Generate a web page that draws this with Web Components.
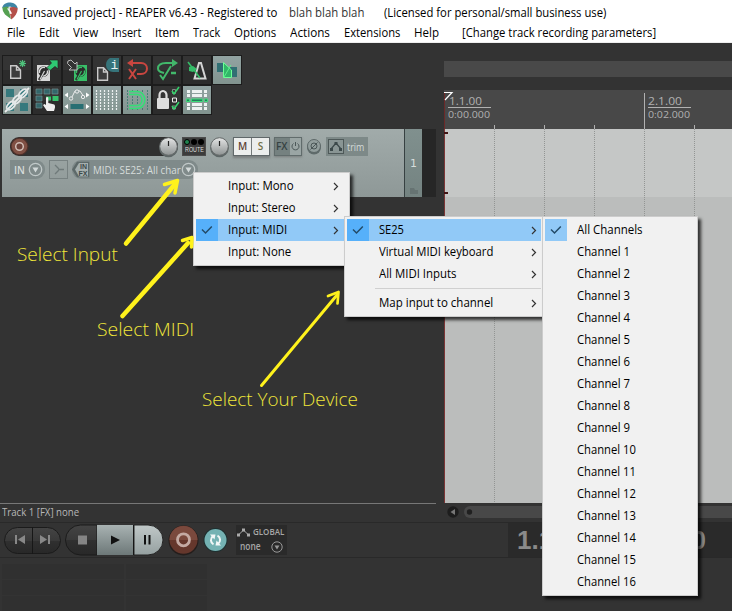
<!DOCTYPE html>
<html lang="en"><head><meta charset="utf-8"><title>REAPER</title>
<style>html,body{margin:0;width:732px;height:611px;overflow:hidden;background:#333}body{font:12px "Open Sans","Noto Sans",sans-serif}</style>
</head><body><reaper-app></reaper-app>
<script>
const define=(name,html,setup)=>customElements.define(name,class extends HTMLElement{
  connectedCallback(){
    if(this.shadowRoot)return;
    const t=document.createElement('template');
    t.innerHTML=typeof html==='function'?html(this):html;
    this.attachShadow({mode:'open'}).append(t.content.cloneNode(true));
    if(setup)setup(this,this.shadowRoot);
  }
});

/* Text condensed or widened to an exact advance width (attribute w). */
define('fit-text',e=>`<style>:host{display:inline-block;width:${e.getAttribute('w')}px;white-space:nowrap;flex:none}
span{display:inline-block;transform-origin:0 50%}</style><span>${e.textContent}</span>`,(e,r)=>{
  const s=r.querySelector('span');
  s.style.transform=`scaleX(${e.getAttribute('w')/s.offsetWidth})`;
});

define('title-bar',`<style>:host{display:flex;align-items:center;height:24px;background:#fff;color:#000;box-sizing:border-box;padding-left:2px}
svg{margin:-3px 5px 0 0;flex:none}.b{margin:1px 20px 0 12px;color:#333}</style>
<svg width="16" height="18" viewBox="0 0 16 18"><path d="M.2 6C.8 2 5 .3 8.500.5S15 3 15.800 6.500L12 6 8 4.500 4 5.500Z" fill="#3f86a5"/><path d="M.3 5.500 5 4.500 7.500 6 7 9 9 17 3 12.500Q.3 9.500.3 5.500Z" fill="#55a052"/><path d="M7 6C9.500 4.500 13 4.800 15.800 6.500 15.500 11 13 15 9.300 17.500L8 12 10 11.500Z" fill="#b4504a"/><path d="M5 6.500 8 6 7 9.500Z" fill="#e8f0ee"/></svg>
<fit-text w="254">[unsaved project] - REAPER v6.43 - Registered to</fit-text><fit-text class="b" w="75">blah blah blah</fit-text><fit-text w="222">(Licensed for personal/small business use)</fit-text>`);

define('menu-bar',`<style>:host{display:flex;align-items:center;gap:14px;height:19px;background:#fff;color:#000;padding-left:7px;box-sizing:border-box;border-bottom:1px solid #eee;line-height:16px}.c{margin-left:9px}</style>
${[['File',18],['Edit',20],['View',25],['Insert',29],['Item',24],['Track',27],['Options',42],['Actions',40],['Extensions',56],['Help',25]].map(([a,w])=>`<fit-text w="${w}">${a}</fit-text>`).join('')}<fit-text class="c" w="194">[Change track recording parameters]</fit-text>`);

const disk=(x,c)=>`<g transform="translate(${x} 10)"><path d="M0 0H13V16H0Z" fill="${c}"/><circle cx="6.500" cy="6.500" r="5.200" fill="#2b2b2b"/><path d="M2.500 8A4.500 4.500 0 0 1 8 2.500M10.500 5.500A4.500 4.500 0 0 1 6 11" stroke="${c}" stroke-width="1.500" fill="none"/><path d="M7 7 2 15" stroke="#2b2b2b" stroke-width="2.500"/><path d="M7.500 6 3 14.500" stroke="${c}" stroke-width="1.200"/></g>`;
const doc=(x,y)=>`<path transform="translate(${x} ${y})" d="M.7.7H6.500L10.500 5V13.300H.7ZM6.500.7V5H10.500" fill="#3c3c3c" stroke="#c9c9c9" stroke-width="1.400"/>`;
const icons={
 fresh:doc(8,10)+`<path d="M20.500 5v7M17 8.500h7M18 6l5 5M23 6l-5 5" stroke="#4fc27c" stroke-width="1.200"/>`,
 open:disk(5,'#d8d8d8')+`<path d="M17 5h9v9l-3-2.500-5 4-3-3 4.500-4.500Z" fill="#2fc873" stroke="#222" stroke-width=".7"/>`,
 save:disk(12,'#38bf68')+`<path d="M6 6 9 5l4 4 2-2V15H7l2.500-2.500-4-4Z" fill="#333" stroke="#bbb"/>`,
 info:doc(5,12)+`<path d="M27 3V17H21A7 7 0 0 1 14 10C14 6 16 4 18 3Z" fill="#36747a"/><text x="18.500" y="13.500" font-family="Liberation Mono" font-size="13" fill="#e8f0f0">i</text>`,
 undo:`<g fill="none" stroke="#c94640" stroke-width="2"><path d="M9 8H19C27 8 27 19 19 19H15"/><path d="M7 14 14 24M14 14 7 24"/></g><path d="M5 8l6-4v8Z" fill="#c94640"/>`,
 redo:`<g fill="none" stroke="#42b86b" stroke-width="2"><path d="M23 8H14C9 8 6 10 6 13.500S9 17 12 18"/><path d="M8 20l3 4 8-13"/><path d="M19 18h5" stroke-width="2.500"/></g><path d="M26 8l-6-4v8Z" fill="#42b86b"/>`,
 metro:`<path d="M12.500 23.500 17 8H19L23.500 23.500Z" fill="none" stroke="#d4d4d4" stroke-width="2"/><path d="M6 7 18 23" stroke="#35bd68" stroke-width="1.600"/><path d="M7 12l4-1 4 3-4 3-4-1Z" fill="#35bd68"/>`,
 auto:`<path d="M5 8h6v9H5ZM18 12h7v10h-7Z" fill="#306f73"/><path d="M11.500 7.500V22.500H19.500V15Z" fill="#31b768" stroke="#6dff97" stroke-width="1"/><path d="M12 22 19 10" stroke="#5bf08c"/>`,
 ripple:`<path d="M4 4h8v8H4ZM18 4h8v8h-8ZM4 18h8v8H4ZM18 18h8v8h-8Z" fill="#36797d"/><path d="M3 27 27 3" stroke="#eee" stroke-width="1.800"/><g fill="none" stroke="#e4e8e8" stroke-width="1.900"><ellipse cx="9" cy="20.500" rx="5.200" ry="3" transform="rotate(-45 9 20.500)"/><ellipse cx="15" cy="14.500" rx="5.200" ry="3" transform="rotate(-45 15 14.500)"/><ellipse cx="21" cy="8.500" rx="5.200" ry="3" transform="rotate(-45 21 8.500)"/></g>`,
 group:`<path d="M4 4h6v5H4ZM12 4h6v5h-6ZM20 4h6v5h-6ZM4 11h6v5H4ZM4 18h6v5H4Z" fill="#33666a" stroke="#709090" stroke-width=".7"/><path d="M14 11.500h5v4h-5ZM20.500 11h6v5h-6Z" fill="#36c16b"/><path d="M14 12.500q1.500-1 2.300 0V18l6 1.500q1 1 .7 3L22 26H15l-4-6 1.500-1L14 20Z" fill="#eee"/>`,
 env:`<path d="M9 14 13 6 18 6 22 12" stroke="#eee" fill="none"/><g fill="#8a9c9b" stroke="#eee"><circle cx="9" cy="13.500" r="1.700"/><circle cx="15" cy="6.500" r="1.700"/><circle cx="21" cy="12" r="1.700"/></g><path d="M8.500 19h13v5h-13Z" fill="#286f73"/><path d="M6 7.500v5L2.500 10ZM24 7.500v5l3.500-2.500ZM6 19v5l-3.500-2.500ZM24 19v5l3.500-2.500Z" fill="#fff"/>`,
 grid:`<path d="M4.500 5v20M8.500 5v20M12.500 5v20M16.500 5v20M20.500 5v20M24.500 5v20" stroke="#edf2f2" stroke-width="1.200" stroke-dasharray="2 1"/>`,
 snap:`<path d="M5.500 5v20M10.500 5v20M15.500 5v20M20.500 5v20M25.500 5v20" stroke="#487d76" stroke-dasharray="2 1"/><path d="M7 8h8c8.500 0 8.500 14 0 14H7" fill="none" stroke="#34df75" stroke-width="4.500"/><path d="M7 8h8c8.500 0 8.500 14 0 14H7" fill="none" stroke="#7fa79a" stroke-width="1.500"/>`,
 lock:`<rect x="5" y="13" width="12" height="11" rx="1" fill="#ddd"/><path d="M7.500 14V10a3.500 4 0 0 1 7 0v4" fill="none" stroke="#ddd" stroke-width="2.200"/><path d="M20.500 13h4v4h-4Z" fill="none" stroke="#eee"/><path d="M20.500 4.500h3v4h-3ZM20.500 21h3v3h-3Z" fill="none" stroke="#888"/><path d="M20 6l2 3 5-7M20 21l2 3 5-7" fill="none" stroke="#35d36c" stroke-width="1.500"/>`,
 matrix:`<g fill="#edf1f1"><path d="M5 5h3v3H5ZM10 5h10v3H10ZM22 5h3v3h-3ZM5 9h3v3H5ZM10 9h10v3H10ZM22 9h3v3h-3ZM5 18h3v3H5ZM10 18h10v3H10ZM22 18h3v3h-3ZM5 22h3v3H5ZM10 22h10v3H10ZM22 22h3v3h-3Z"/></g><path d="M4.500 14h3v2.500h-3ZM9.500 14h11v2.500h-11ZM22.500 14h3v2.500h-3Z" fill="#267a5c" stroke="#3ade78"/>`
};
define('tool-button',e=>`<style>:host{display:block;width:30px;height:30px;box-sizing:border-box;border:1px solid #1c1c1c;background:linear-gradient(#343434 50%,#2c2c2c 50%)}
:host([active]){background:linear-gradient(#92a3a2,#82948f)}svg{display:block;margin:-1px}</style><svg width="30" height="30">${icons[e.getAttribute('icon')]}</svg>`);
define('tool-bar',`<style>:host{display:grid;grid-template-columns:repeat(8,30px);grid-auto-rows:30px;padding:12px 0 0 2px;height:86px;box-sizing:border-box}</style>
${['fresh','open','save','info','undo','redo','metro','auto*','ripple*','group','env*','grid*','snap*','lock','matrix*'].map(n=>`<tool-button icon="${n.replace('*','')}" ${n.includes('*')?'active':''}></tool-button>`).join('')}`);

const down='<svg width="15" height="15" viewBox="0 0 15 15"><circle cx="7.500" cy="7.500" r="6.200" fill="none" stroke="#c0c8c8" stroke-width="1.300"/><path d="M4.500 5.500h6l-3 5Z" fill="#d3d9d9"/></svg>';
define('round-knob',`<style>:host{display:block;width:19px;height:19px;flex:none}</style><svg width="20" height="21" viewBox="0 0 20 21"><defs><linearGradient id="k" x2="0" y2="1"><stop stop-color="#e4e5e5"/><stop offset="1" stop-color="#8e9393"/></linearGradient></defs><circle cx="9.500" cy="11" r="9.300" fill="#5e6767"/><circle cx="9.500" cy="9.500" r="8.800" fill="url(#k)" stroke="#656a6a"/><path d="M9.500 4v5" stroke="#222" stroke-width="1.200"/></svg>`);
define('track-panel',`<style>
:host{display:grid;grid-template-columns:402px 1px 17px 14px;height:68px;margin-left:2px;color:#d6dcdb}
.main{background:linear-gradient(#a1abaa,#8e9897);padding:8px 0 0 8px;box-sizing:border-box}
.row{display:flex;align-items:center;height:19px}.sep{background:#374142}.num{background:linear-gradient(#80908e,#748381);display:flex;flex-direction:column;align-items:center;justify-content:space-between;padding-top:27px;box-sizing:border-box;font:11px/16px "DejaVu Sans";}
.num svg{margin-bottom:2px}.dark{background:#262626}
.vol{width:168px;height:19px;background:#303030;border-radius:9px;display:flex;justify-content:space-between}
.route{width:24px;height:19px;background:#3c3c3c;margin-left:4px;box-sizing:border-box;border:1px solid #4b4b4b;font:6.500px/8px "Liberation Sans";text-align:center;color:#ddd}
.route svg{display:block}.ms{display:flex;margin-left:4px;border:1px solid #60686a;height:17px;background:#eceeed;box-shadow:0 2px 2px #6669}.ms b{width:17px;text-align:center;font:600 10px/17px "Open Sans";color:#604335}.ms b+b{border-left:1px solid #747a7a;color:#707048}
.fx{display:flex;margin-left:4px;width:26px;height:17px;border:1px solid #616c6c;background:#758180;font:600 10px/17px "Open Sans";color:#364243;box-shadow:0 1px 2px #6669}.fx i{display:flex;background:#9aa5a4;width:11px;margin-left:auto;align-items:center}
.ph{margin:0 4px 0 4px}.trim{display:flex;align-items:center;width:42px;height:19px;background:#7d8988;font-size:10px;color:#d2d9d8}.trim svg{margin:0 3px 0 2px}
.in{height:19px;width:34px;background:#7f8a8a;border-radius:0 9px 9px 0;display:flex;align-items:center;justify-content:space-between;padding-right:1px;font-weight:600;font-size:10px}.in span{padding-left:4px}.in svg{margin-right:1px}
.mon{width:17px;height:17px;border:1px solid #778181;margin:0 4px;display:flex}.midi{width:126px;height:19px;background:#7f8a8a;display:flex;align-items:center;border-radius:9px;font-size:10.500px}
</style>
<div class="main"><div class="row"><div class="vol"><svg width="19" height="19"><circle cx="9.500" cy="9.500" r="9" fill="#4d302a"/><circle cx="9.500" cy="9.500" r="7.800" fill="#805044"/><circle cx="9.500" cy="9.500" r="3.800" fill="#6d4139" stroke="#d0bcb4" stroke-width="1.500"/></svg><round-knob></round-knob></div>
<div class="route"><svg width="22" height="8"><circle cx="4" cy="4" r="2.500" fill="#20834e" stroke="#000"/><circle cx="11" cy="4" r="3"/><circle cx="18" cy="4" r="3"/></svg><fit-text w="19">ROUTE</fit-text></div><round-knob style="margin-left:4px"></round-knob>
<div class="ms"><b>M</b><b>S</b></div><div class="fx"><fit-text w="12" style="margin-left:1px">FX</fit-text><i><svg width="11" height="11"><path d="M3.500 2.500a3.500 3.500 0 1 0 4 0M5.500 1v4" fill="none" stroke="#4b5758"/></svg></i></div>
<svg class="ph" width="16" height="17"><circle cx="8" cy="9.500" r="7" fill="#5f6b6b"/><circle cx="8" cy="8" r="6.500" fill="#929e9d" stroke="#5d6868"/><circle cx="8" cy="8" r="3" fill="none" stroke="#4b5758"/><path d="M4.500 11.500 11.500 4.500" stroke="#4b5758"/></svg>
<div class="trim"><svg width="16" height="15"><rect x=".5" y=".5" width="15" height="14" fill="#899594" stroke="#4e5959"/><path d="M3 10 8 4 13 10" fill="none" stroke="#3c494a" stroke-width="1.200"/><path d="M2 9h3v3H2ZM6.500 3h3v3h-3ZM11 9h3v3h-3Z" fill="#3c494a"/></svg><fit-text w="17">trim</fit-text></div></div>
<div class="row" style="margin-top:4px"><div class="in"><span>IN</span>${down}</div><div class="mon"><svg width="17" height="17"><path d="M5 4l3 3 1 1.500L8 10l-3 3M9 8.500h5" fill="none" stroke="#6f7a7a" stroke-width="1.300"/></svg></div>
<div class="midi"><svg width="18" height="17" viewBox="0 0 18 17"><path d="M0 8.500 5 .7H17.300V16.300H5Z" fill="#5d6969"/><path d="M3 8.500 7 2H16V15.500H7Z" fill="#a5afae"/><g font-family="Liberation Sans" font-size="7" font-weight="700" fill="#3d494a"><text x="8" y="8">IN</text><text x="6.500" y="15">FX</text></g></svg><fit-text w="88" style="margin-left:3px">MIDI: SE25: All char</fit-text>${down}</div></div></div>
<div class="sep"></div><div class="num">1<svg width="10" height="8"><path d="M1 1h4l1 2h3v4H1Z" fill="#667372"/></svg></div><div class="dark"></div>`);

define('time-line',`<style>:host{display:block;position:relative;width:288px;height:479px}
.nav{height:16px;background:#494949;margin-top:18px}.ruler{margin-top:13px;height:39px;background:#484848;overflow:hidden}.arr{height:374px;background:linear-gradient(#c5c7c6 68px,#bbbdbc 68px)}svg{display:block}
.sb{display:flex;align-items:center;height:17px;padding:0 0 0 3px;gap:5px}.bar{flex:1;height:12px;background:#484848;border-radius:6px 0 0 6px}</style>
<div class="nav"></div><div class="ruler"><svg width="288" height="39"><path d="M.5 3V39" stroke="#6b2929"/><path d="M0 2.500H8L1 10" fill="none" stroke="#fff" stroke-width="1.200"/><path d="M200.500 3V39M50.500 35v4M100.500 35v4M150.500 35v4M250.500 35v4M4 17.500h43M204 17.500h43" stroke="#b1b1b1"/><g font-family="Open Sans" fill="#b1b1b1"><g font-size="11"><text x="5" y="15" textLength="33" lengthAdjust="spacingAndGlyphs">1.1.00</text><text x="204" y="15" textLength="34" lengthAdjust="spacingAndGlyphs">2.1.00</text></g><g font-size="9.500"><text x="4" y="28" textLength="42" lengthAdjust="spacingAndGlyphs">0:00.000</text><text x="204" y="28" textLength="42" lengthAdjust="spacingAndGlyphs">0:02.000</text></g></g></svg></div>
<div class="arr"><svg width="288" height="374"><path d="M50.500 0V374M100.500 0V374M150.500 0V374M200.500 0V374M250.500 0V374" stroke="#929593" stroke-dasharray="1 1"/><path d="M.5 0V374" stroke="#7b3535"/><path d="M0 4h4M0 64h4" stroke="#401515" stroke-width="2"/></svg></div>
<div class="sb"><svg width="12" height="12"><circle cx="6" cy="6" r="5.700" fill="#1d1d1d"/><path d="M8 3v6L3.500 6Z" fill="#777"/></svg><div class="bar"><svg width="12" height="12"><circle cx="5.500" cy="6" r="2.700" fill="#202020"/></svg></div></div>`);

define('transport-bar',`<style>:host{display:flex;height:36px;border-top:1px solid #292929;border-bottom:1px solid #292929;box-sizing:border-box;background:#333;align-items:center}
.glob{background:#2a2a2a;width:50px;height:30px;margin-left:2px;color:#a7a7a7;font-weight:600;font-size:9px;line-height:14px;padding-left:1px}.glob div{display:flex;align-items:center;gap:3px}.glob div+div{justify-content:space-between;padding:0 4px 0 3px;font-size:10px}
.time{margin-left:221px;flex:1;align-self:stretch;background:#2a2a2a;display:flex;align-items:center;justify-content:space-between;padding:0 26px 0 9px;font:bold 26px "Liberation Sans";color:#8a8a8a}</style>
<svg width="234" height="34"><defs><linearGradient id="d" x2="0" y2="1"><stop stop-color="#444"/><stop offset=".5" stop-color="#393939"/><stop offset=".51" stop-color="#303030"/><stop offset="1" stop-color="#282828"/></linearGradient><linearGradient id="l" x2="0" y2="1"><stop stop-color="#a8b2b2"/><stop offset="1" stop-color="#6d7878"/></linearGradient><linearGradient id="p" x2="0" y2="1"><stop stop-color="#c0c8c8"/><stop offset="1" stop-color="#95a0a0"/></linearGradient></defs>
<rect x="4.500" y="4.500" width="56" height="26" rx="13" fill="url(#d)" stroke="#1b1b1b"/><path d="M32.500 4v27" stroke="#171717"/>
<path d="M16 12v9" stroke="#888" stroke-width="2"/><path d="M25 12v9l-7-4.500ZM40 12v9l7-4.500Z" fill="#888"/><path d="M49 12v9" stroke="#888" stroke-width="2"/>
<path d="M97 2H80.500a15 15 0 0 0 0 30H97Z" fill="url(#d)" stroke="#1b1b1b"/><path d="M97 2h36v30H97Z" fill="url(#l)"/><path d="M134 2h14a15 15 0 0 1 0 30H134Z" fill="url(#p)" stroke="#252525"/><path d="M133.500 2v30" stroke="#161616"/>
<path d="M78 12.500h9v9h-9Z" fill="#858585"/><path d="M111 12.500v9l9-4.500Z" fill="#111"/><path d="M145 12v9.500M149.500 12v9.500" stroke="#111" stroke-width="2"/>
<circle cx="183.500" cy="17.500" r="15" fill="#251e1c"/><circle cx="183.500" cy="16.800" r="14" fill="#65372c"/><path d="M169.500 17a14 14 0 0 1 28 0Z" fill="#7a493d"/><circle cx="183.500" cy="16.800" r="6" fill="none" stroke="#c4aaa3" stroke-width="2.800"/>
<circle cx="215.500" cy="17" r="12" fill="#1e3030"/><circle cx="215.500" cy="17" r="11" fill="#74b2b3"/><g fill="none" stroke="#f1f7f7" stroke-width="2"><path d="M213.500 21.300a4.800 4.800 0 0 1-.5-8.200M217.500 12.700a4.800 4.800 0 0 1 .5 8.200"/></g><path d="M210 11.500h5.500l-1 5ZM221 22.500h-5.500l1-5Z" fill="#f1f7f7"/></svg>
<div class="glob"><div><svg width="13" height="10"><path d="M1.500 8 6.500 3 11.500 8" fill="none" stroke="#aaa"/><path d="M0 6.500h3v3H0ZM5 1.500h3v3H5ZM10 6.500h3v3h-3Z" fill="#aaa"/></svg><fit-text w="31">GLOBAL</fit-text></div><div><fit-text w="21">none</fit-text><svg width="12" height="12" style="margin-top:2px"><circle cx="6" cy="6" r="5.200" fill="none" stroke="#999"/><path d="M3.500 4.500h5L6 8.500Z" fill="#999"/></svg></div></div>
<div class="time"><span>1.1</span><span>0</span></div>`);

define('meter-pads',`<style>:host{display:grid;grid-template-columns:122px 81px;grid-auto-rows:15px;gap:1px 2px;padding:6px 0 0 2px;height:53px;box-sizing:border-box;background:#333;overflow:hidden}i{background:#303030}</style><i></i><i></i><i></i><i></i><i></i><i></i>`);

define('menu-item',e=>{const f=n=>e.hasAttribute(n);return `<style>:host{display:flex;height:22px;align-items:center;line-height:22px}
:host([sel]){background:#91c9f7}.k{width:22px;height:22px;margin-right:10px;flex:none}:host([checked]) .k{background:#91c9f7}:host([sel]) .k{background:#56b0fa}
fit-text{flex:none}.ch{margin-left:auto;margin-right:var(--chevron-inset,8px)}svg{display:block}</style><div class="k">${f('checked')?'<svg width="22" height="22"><path d="M6 10.500 9.500 14 15.800 7.500" fill="none" stroke="#234b68" stroke-width="1.500"/></svg>':''}</div>
<fit-text w="${e.getAttribute('w')}">${e.textContent}</fit-text>${f('sub')?'<svg class="ch" width="6" height="9"><path d="M1 1 4.500 4.500 1 8" fill="none" stroke="#333" stroke-width="1.200"/></svg>':''}`});
define('popup-menu',`<style>:host{display:block;position:absolute;box-sizing:border-box;background:#f1f1f1;border:1px solid #ccc;padding:2px;color:#000;box-shadow:3px 3px 3px #000b}</style><slot></slot>`);
define('menu-rule',`<style>:host{display:block;height:1px;background:#d0d0d0;margin:3px 0 3px 28px}</style>`);

define('note-label',`<style>:host{position:absolute;display:block;font-size:19px;font-weight:300;line-height:26px;color:#f0e63a}</style><slot></slot>`);
define('note-arrows',`<style>:host{position:absolute;left:0;top:0;display:block}svg{display:block}</style><svg width="350" height="420" fill="none" stroke="#fff21c" stroke-linecap="round" stroke-linejoin="round"><path stroke-width="4.500" d="M126 243.500 175 184"/><path stroke-width="3.500" d="M164.500 184.500 177.500 180.500 175 193"/><path stroke-width="4.500" d="M122.500 316 188 243"/><path stroke-width="3.500" d="M182.500 240.500 192 237.500 191.500 247"/><path stroke-width="3" d="M261.500 385.500 337 295"/><path stroke-width="2.700" d="M328 296 338.500 292 337.500 303.500"/></svg>`);

define('reaper-app',`<style>:host{display:block;position:relative;width:732px;height:611px;background:#333}
.work{display:grid;grid-template-columns:437px 288px;column-gap:7px;height:479px}.left{display:flex;flex-direction:column}.status{margin-top:auto;border-top:1px solid #777;height:19px;line-height:17px;font-size:10px;color:#b8b8b8;padding-left:2px;width:436px;box-sizing:border-box}</style>
<title-bar></title-bar><menu-bar></menu-bar>
<div class="work"><div class="left"><tool-bar></tool-bar><track-panel></track-panel><div class="status"><fit-text w="77">Track 1 [FX] none</fit-text></div></div><time-line></time-line></div>
<transport-bar></transport-bar><meter-pads></meter-pads>
<popup-menu style="left:193px;top:172px;width:157px;height:94px"><menu-item w="66" sub>Input: Mono</menu-item><menu-item w="67" sub>Input: Stereo</menu-item><menu-item w="59" sel checked sub>Input: MIDI</menu-item><menu-item w="63">Input: None</menu-item></popup-menu>
<note-arrows></note-arrows>
<popup-menu style="left:344px;top:216px;width:200px;height:101px;--chevron-inset:4px"><menu-item w="25" sel checked sub>SE25</menu-item><menu-item w="114" sub>Virtual MIDI keyboard</menu-item><menu-item w="78" sub>All MIDI Inputs</menu-item><menu-rule></menu-rule><menu-item w="114" sub>Map input to channel</menu-item></popup-menu>
<popup-menu style="left:542px;top:216px;width:156px;height:380px"><menu-item w="66" checked>All Channels</menu-item>${Array.from({length:16},(_,i)=>`<menu-item w="${i<9?53:59}">Channel ${i+1}</menu-item>`).join('')}</popup-menu>
<note-label style="left:17px;top:241px"><fit-text w="101">Select Input</fit-text></note-label><note-label style="left:97px;top:316px"><fit-text w="97">Select MIDI</fit-text></note-label><note-label style="left:202px;top:386px"><fit-text w="156">Select Your Device</fit-text></note-label>`);
</script></body></html>
